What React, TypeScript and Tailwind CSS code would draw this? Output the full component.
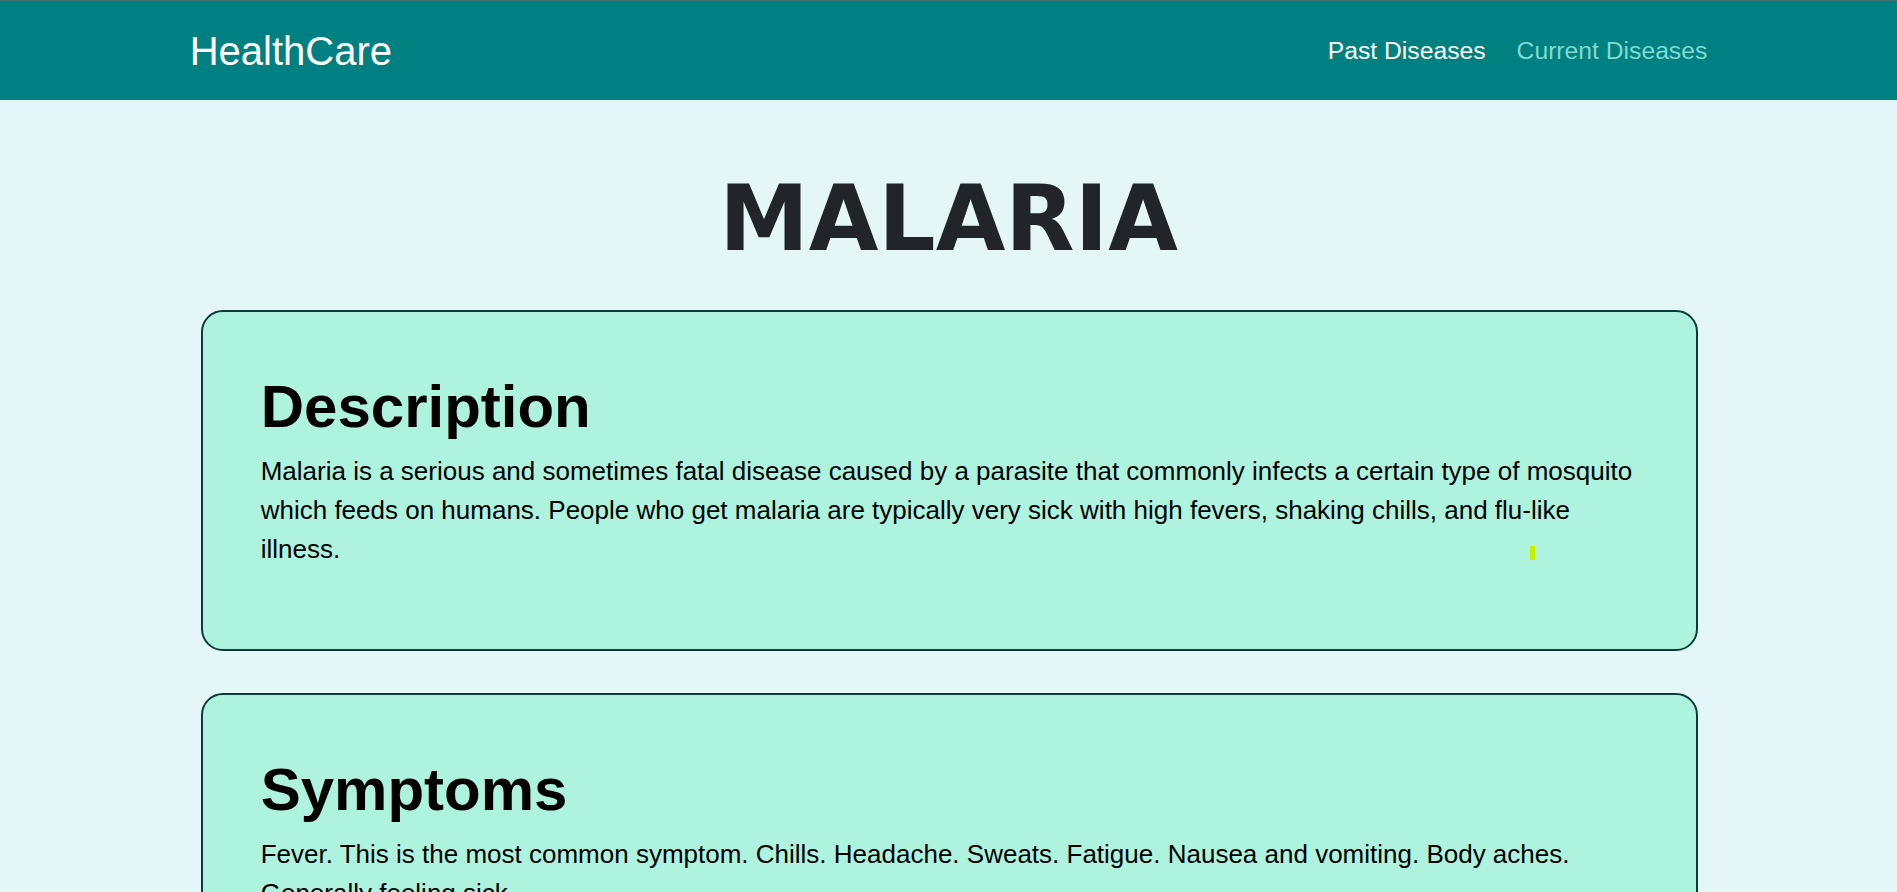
const sections = [
  {
    title: "Description",
    body: "Malaria is a serious and sometimes fatal disease caused by a parasite that commonly infects a certain type of mosquito which feeds on humans. People who get malaria are typically very sick with high fevers, shaking chills, and flu-like illness.",
    mark: true,
  },
  {
    title: "Symptoms",
    body: "Fever. This is the most common symptom. Chills. Headache. Sweats. Fatigue. Nausea and vomiting. Body aches. Generally feeling sick.",
    mark: false,
  },
];

const App = () => {
  return (
    <div className="min-h-screen bg-[#e4f7f6] pb-16 font-['Liberation_Sans',Arial,sans-serif] text-black">
      <nav className="h-[100px] border-t border-[#3f7375] bg-[#008080]">
        <div className="mx-auto flex h-full w-[80%] items-center justify-between">
          <a href="#" className="text-[40px] text-white">
            HealthCare
          </a>
          <div className="flex items-center gap-[31px] text-[24.7px]">
            <a href="#" className="text-white">
              Past Diseases
            </a>
            <a href="#" className="text-[#7fdad2]">
              Current Diseases
            </a>
          </div>
        </div>
      </nav>

      <main className="mx-auto w-[80%]">
        <h1 className="mt-[65px] mb-[37px] text-center font-['DejaVu_Sans',sans-serif] text-[90px] leading-[1.2] font-bold text-[#212529]">
          MALARIA
        </h1>

        <div className="ml-[11px] mr-[9px] flex flex-col gap-[42px]">
          {sections.map((s) => (
            <section
              key={s.title}
              className="relative rounded-[22px] border-2 border-[#0b3b3a] bg-[#adf3de] px-[58px] pt-[59px] pb-[80px]"
            >
              <h2 className="mb-[9px] text-[60px] leading-[1.2] font-bold">{s.title}</h2>
              <p className="text-[26px] leading-[1.5]">{s.body}</p>
              {s.mark && (
                <span className="absolute left-[1327px] top-[234px] h-[14px] w-[5px] bg-[#c6ef00]"></span>
              )}
            </section>
          ))}
        </div>
      </main>
    </div>
  );
};

export default App;
